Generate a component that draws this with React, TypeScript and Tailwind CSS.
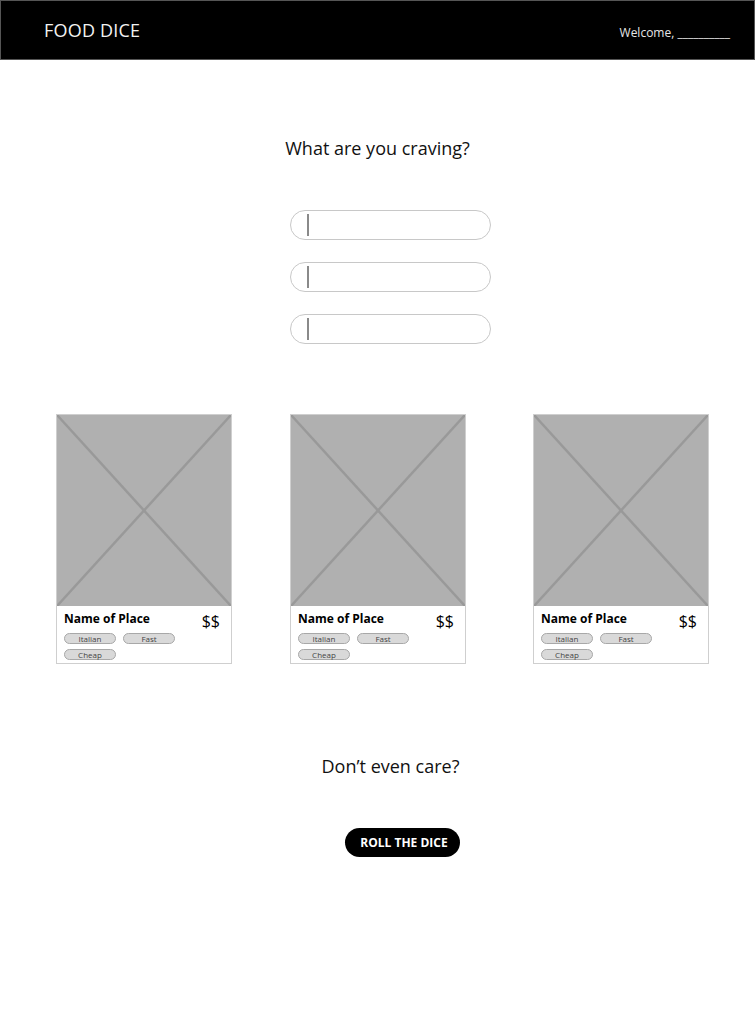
import React from "react";

const FONT = { fontFamily: '"Open Sans", "Liberation Sans", sans-serif' };

function Pill({ label }: { label: string }) {
  return (
    <span className="flex h-[11px] w-[52px] items-center justify-center rounded-full border border-[#a8a8a8] bg-[#d9d9d9] text-[8px] leading-none text-[#444]">
      {label}
    </span>
  );
}

function PlaceCard({ className = "" }: { className?: string }) {
  return (
    <div className={`w-[176px] border border-[#cfcfcf] ${className}`}>
      <div className="relative h-[191px] bg-[#b0b0b0]">
        <svg className="absolute inset-0 h-full w-full" viewBox="0 0 176 191" preserveAspectRatio="none">
          <line x1="0" y1="0" x2="176" y2="191" stroke="#999" strokeWidth="2.5" />
          <line x1="176" y1="0" x2="0" y2="191" stroke="#999" strokeWidth="2.5" />
        </svg>
      </div>
      <div className="px-[7px] pt-[5px] pb-[2px]">
        <div className="flex h-[21px] items-start justify-between">
          <span className="text-[12px] font-bold leading-[16px] text-black">Name of Place</span>
          <span className="mr-[4px] mt-[1px] text-[16px] leading-[18px] text-black">$$</span>
        </div>
        <div className="mt-[1px] flex w-[120px] flex-wrap gap-x-[7px] gap-y-[5px] pb-[1px]">
          <Pill label="Italian" />
          <Pill label="Fast" />
          <Pill label="Cheap" />
        </div>
      </div>
    </div>
  );
}

function CravingInput() {
  return (
    <div className="flex h-[30px] w-[201px] items-center rounded-full border border-[#c8c8c8] bg-white pl-[16px]">
      <span className="h-[22px] w-[2px] bg-[#8a8a8a]" />
    </div>
  );
}

export default function App() {
  return (
    <div className="min-h-[1023px] w-[755px] bg-white" style={FONT}>
      <header className="flex h-[60px] items-center justify-between border border-[#555] bg-black pl-[43px] pr-[24px]">
        <span className="mt-[1px] text-[18px] tracking-[0.2px] text-[#f2f2f2]">FOOD DICE</span>
        <span className="mt-[6px] text-[12px] text-[#e6e6e6]">Welcome, __________</span>
      </header>

      <h1 className="mt-[76px] text-center text-[18px] leading-[24px] text-[#111]">What are you craving?</h1>

      <div className="mt-[50px] flex flex-col items-center gap-[22px] pl-[26px]">
        <CravingInput />
        <CravingInput />
        <CravingInput />
      </div>

      <div className="mt-[70px] flex pl-[56px]">
        <PlaceCard />
        <PlaceCard className="ml-[58px]" />
        <PlaceCard className="ml-[67px]" />
      </div>

      <h2 className="mt-[90px] pl-[26px] text-center text-[18px] leading-[24px] text-[#111]">Don’t even care?</h2>

      <div className="mt-[50px] flex justify-center pl-[50px]">
        <button className="h-[29px] w-[115px] rounded-full bg-black pl-[3px] text-[12px] font-bold text-white">
          ROLL THE DICE
        </button>
      </div>
    </div>
  );
}
